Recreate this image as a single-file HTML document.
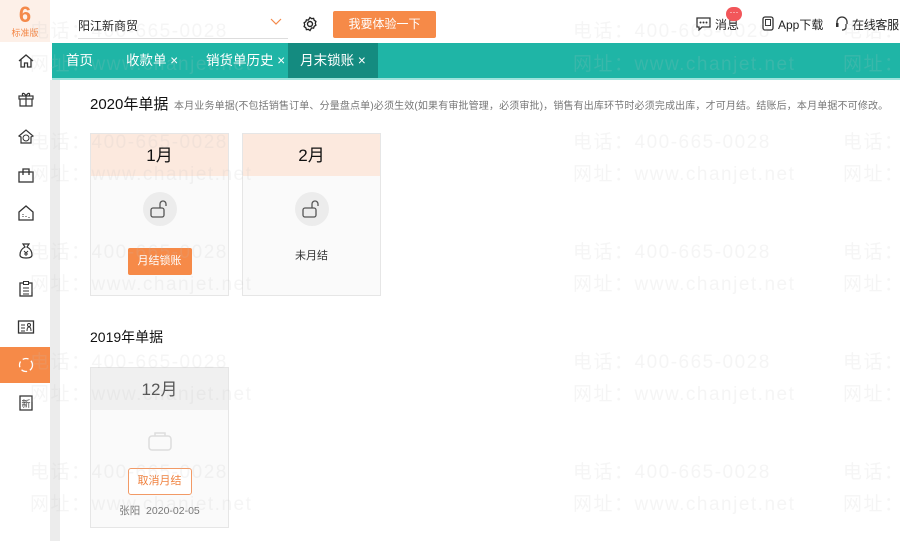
<!DOCTYPE html>
<html><head><meta charset="utf-8">
<style>
*{margin:0;padding:0;box-sizing:border-box}
body{width:900px;height:541px;overflow:hidden;background:#fff;font-family:"Liberation Sans","Noto Sans CJK SC",sans-serif;position:relative;color:#333}
.abs{position:absolute}
.side{left:0;top:0;width:50px;height:541px;background:#fff}
.logo{left:0;top:0;width:50px;height:42px;background:#fdf0e8;text-align:center}
.strip{left:50px;top:80px;width:10px;height:461px;background:#ececec}
.top{left:50px;top:0;width:850px;height:43px;background:#fff}
.tabs{left:52px;top:43px;width:848px;height:37px;background:#1fb5a6;border-bottom:2px solid #9fe3dc}
.tab{position:absolute;top:0;height:35px;line-height:35px;color:#fff;font-size:13.5px}
.ico{position:absolute;left:17px;width:18px;height:18px}
.card{position:absolute;width:139px;border:1px solid #e6e6e6;background:#fafafa}
.ch{height:42px;line-height:44px;text-align:center;font-size:17px;color:#111;background:#fce9de}
.lockc{width:34px;height:34px;border-radius:50%;background:#ececec;margin:16px auto 0;position:relative}
.wm{position:absolute;font-size:19px;color:rgba(190,190,190,0.16);white-space:nowrap;letter-spacing:1.5px;font-family:"Liberation Sans","Noto Sans CJK SC",sans-serif;pointer-events:none}
</style></head><body>
<div class="abs side"></div>
<div class="abs logo">
<div style="font-size:22px;font-weight:bold;color:#f4894a;line-height:26px;padding-top:2px">6</div>
<div style="font-size:9px;color:#f4894a;line-height:10px">标准版</div>
</div>
<div class="abs strip"></div>
<div class="abs top"></div>
<div class="abs" style="left:78px;top:17px;font-size:12px;color:#222">阳江新商贸</div>
<div class="abs" style="left:78px;top:38px;width:210px;height:1px;background:#ddd"></div>
<svg class="abs" style="left:270px;top:18px" width="12" height="8"><path d="M1 1l5 5 5-5" fill="none" stroke="#f4894a" stroke-width="1.2"/></svg>
<svg class="abs" style="left:302px;top:16px" width="16" height="16" viewBox="0 0 16 16"><circle cx="8" cy="8" r="2.5" fill="none" stroke="#222" stroke-width="1.4"/><path d="M8 1.5l1.6 1.2 2-.3.6 1.9 1.7 1.1-.6 1.9.6 1.9-1.7 1.1-.6 1.9-2-.3L8 14.5l-1.6-1.2-2 .3-.6-1.9-1.7-1.1.6-1.9-.6-1.9 1.7-1.1.6-1.9 2 .3z" fill="none" stroke="#222" stroke-width="1.3"/></svg>
<div class="abs" style="left:333px;top:11px;width:103px;height:27px;background:#f68a48;border-radius:2px;color:#fff;font-size:12px;text-align:center;line-height:27px">我要体验一下</div>
<svg class="abs" style="left:696px;top:17px" width="15" height="14"><path d="M1 1h13v9H6l-3 3v-3H1z" fill="none" stroke="#333" stroke-width="1.3"/><circle cx="4.5" cy="5.5" r="1" fill="#333"/><circle cx="7.5" cy="5.5" r="1" fill="#333"/><circle cx="10.5" cy="5.5" r="1" fill="#333"/></svg>
<div class="abs" style="left:715px;top:16px;font-size:12px;color:#222">消息</div>
<div class="abs" style="left:726px;top:7px;width:16px;height:14px;border-radius:8px;background:#f2565a;color:#fff;font-size:9px;line-height:10px;text-align:center">···</div>
<svg class="abs" style="left:762px;top:16px" width="12" height="15"><rect x="1" y="1" width="10" height="13" rx="2" fill="none" stroke="#333" stroke-width="1.3"/><rect x="3.5" y="3.5" width="5" height="6" fill="none" stroke="#333"/></svg>
<div class="abs" style="left:778px;top:16px;font-size:12px;color:#222">App下载</div>
<svg class="abs" style="left:835px;top:16px" width="14" height="15"><path d="M2 8V6a5 5 0 0110 0v2M11 8v3a3 3 0 01-3 3H7" fill="none" stroke="#333" stroke-width="1.3"/><rect x="1" y="7" width="2.5" height="4" fill="#333"/></svg>
<div class="abs" style="left:852px;top:16px;font-size:12px;color:#222;letter-spacing:-0.3px">在线客服</div>

<div class="abs tabs">
<div class="tab" style="left:14px">首页</div>
<div class="tab" style="left:74px">收款单 ×</div>
<div class="tab" style="left:154px">销货单历史 ×</div>
<div class="tab" style="left:236px;width:90px;background:#148b80;text-align:center">月末锁账 ×</div>
</div>

<svg class="ico" style="top:52px" viewBox="0 0 18 18"><path d="M2 9l7-6 7 6M4 7.5V15h3.5v-4h3v4H14V7.5" fill="none" stroke="#333" stroke-width="1.3"/></svg>
<svg class="ico" style="top:90px" viewBox="0 0 18 18"><rect x="2" y="6" width="14" height="3" fill="none" stroke="#333" stroke-width="1.2"/><path d="M3 9v7h12V9M9 6v10M9 6C7 2 4 3 6 6M9 6c2-4 5-3 3 0" fill="none" stroke="#333" stroke-width="1.2"/></svg>
<svg class="ico" style="top:128px" viewBox="0 0 18 18"><path d="M2 8l7-6 7 6-2 1v6H4V9z" fill="none" stroke="#333" stroke-width="1.2"/><circle cx="9" cy="10" r="3" fill="none" stroke="#333"/></svg>
<svg class="ico" style="top:166px" viewBox="0 0 18 18"><rect x="2" y="6" width="14" height="10" fill="none" stroke="#333" stroke-width="1.3"/><path d="M6 6V3h6v3M6 6v3M12 6v3" fill="none" stroke="#333" stroke-width="1.3"/></svg>
<svg class="ico" style="top:204px" viewBox="0 0 18 18"><path d="M2 8l7-6 7 6v8H2z" fill="none" stroke="#333" stroke-width="1.3"/><path d="M6 10v4M9 12v2M12 13v1" stroke="#333" stroke-dasharray="1 1"/></svg>
<svg class="ico" style="top:242px" viewBox="0 0 18 18"><path d="M6 2h6l-2 3c4 2 5 5 5 8 0 2-2 3-6 3s-6-1-6-3c0-3 1-6 5-8z" fill="none" stroke="#333" stroke-width="1.2"/><path d="M7 9l2 2 2-2M9 11v3M7 12h4" fill="none" stroke="#333"/></svg>
<svg class="ico" style="top:280px" viewBox="0 0 18 18"><rect x="3" y="3" width="12" height="13" fill="none" stroke="#333" stroke-width="1.3"/><rect x="6.5" y="1.5" width="5" height="3" fill="#fff" stroke="#333"/><path d="M6 8h6M6 11h6M6 14h6" stroke="#333"/></svg>
<svg class="ico" style="top:318px" viewBox="0 0 18 18"><rect x="1.5" y="3" width="15" height="12" fill="none" stroke="#333" stroke-width="1.3"/><path d="M4 7h4M4 10h4M4 13h4M10 13c0-3 1-4 2-4s2 1 2 4" fill="none" stroke="#333"/><circle cx="12" cy="7" r="1.5" fill="none" stroke="#333"/></svg>
<div class="abs" style="left:0;top:347px;width:50px;height:36px;background:#f68a48"></div>
<svg class="ico" style="top:356px" viewBox="0 0 18 18"><circle cx="9" cy="9" r="6.5" fill="none" stroke="#fff" stroke-width="1.3" stroke-dasharray="6 3"/></svg>
<svg class="ico" style="top:394px" viewBox="0 0 18 18"><path d="M3 2h12v14H3z" fill="none" stroke="#333" stroke-width="1.3"/><text x="4.5" y="13" font-size="9" fill="#333" font-family="Noto Sans CJK SC">新</text></svg>

<div class="abs" style="left:90px;top:93px;font-size:15px;color:#111">2020年单据</div>
<div class="abs" style="left:174px;top:97px;font-size:10px;color:#777;white-space:nowrap;letter-spacing:0.15px">本月业务单据(不包括销售订单、分量盘点单)必须生效(如果有审批管理，必须审批)，销售有出库环节时必须完成出库，才可月结。结账后，本月单据不可修改。</div>

<div class="card" style="left:90px;top:133px;height:163px">
<div class="ch">1月</div>
<div class="lockc"><svg style="position:absolute;left:6px;top:6px" width="22" height="22"><rect x="2" y="10" width="13" height="9" rx="2" fill="none" stroke="#555" stroke-width="1.3"/><path d="M11 10V6a3 3 0 016 0v2" fill="none" stroke="#555" stroke-width="1.3"/></svg></div>
<div style="width:64px;height:27px;margin:22px auto 0;background:#f68a48;border-radius:2px;color:#fff;font-size:11px;text-align:center;line-height:27px">月结锁账</div>
</div>
<div class="card" style="left:242px;top:133px;height:163px">
<div class="ch">2月</div>
<div class="lockc"><svg style="position:absolute;left:6px;top:6px" width="22" height="22"><rect x="2" y="10" width="13" height="9" rx="2" fill="none" stroke="#555" stroke-width="1.3"/><path d="M11 10V6a3 3 0 016 0v2" fill="none" stroke="#555" stroke-width="1.3"/></svg></div>
<div style="text-align:center;font-size:11px;color:#333;margin-top:21px">未月结</div>
</div>

<div class="abs" style="left:90px;top:327px;font-size:14px;color:#111">2019年单据</div>
<div class="card" style="left:90px;top:367px;height:161px">
<div class="ch" style="background:#f0f0f0;color:#555">12月</div>
<svg style="display:block;margin:20px auto 0" width="26" height="22"><rect x="2" y="6" width="22" height="14" rx="3" fill="none" stroke="#ddd" stroke-width="1.5"/><path d="M8 6V3h10v3" fill="none" stroke="#ddd" stroke-width="1.5"/></svg>
<div style="width:64px;height:27px;margin:16px auto 0;border:1px solid #f29a66;border-radius:3px;color:#f0823f;font-size:11px;text-align:center;line-height:25px;background:#fff">取消月结</div>
<div style="text-align:center;font-size:10.5px;color:#777;margin-top:8px">张阳&nbsp;&nbsp;2020-02-05</div>
</div>

<div class="wm" style="left:30px;top:16px">电话：400-665-0028</div>
<div class="wm" style="left:573px;top:16px">电话：400-665-0028</div>
<div class="wm" style="left:843px;top:16px">电话：400-665-0028</div>
<div class="wm" style="left:30px;top:49px">网址：www.chanjet.net</div>
<div class="wm" style="left:573px;top:49px">网址：www.chanjet.net</div>
<div class="wm" style="left:843px;top:49px">网址：www.chanjet.net</div>
<div class="wm" style="left:30px;top:127px">电话：400-665-0028</div>
<div class="wm" style="left:573px;top:127px">电话：400-665-0028</div>
<div class="wm" style="left:843px;top:127px">电话：400-665-0028</div>
<div class="wm" style="left:30px;top:159px">网址：www.chanjet.net</div>
<div class="wm" style="left:573px;top:159px">网址：www.chanjet.net</div>
<div class="wm" style="left:843px;top:159px">网址：www.chanjet.net</div>
<div class="wm" style="left:30px;top:237px">电话：400-665-0028</div>
<div class="wm" style="left:573px;top:237px">电话：400-665-0028</div>
<div class="wm" style="left:843px;top:237px">电话：400-665-0028</div>
<div class="wm" style="left:30px;top:269px">网址：www.chanjet.net</div>
<div class="wm" style="left:573px;top:269px">网址：www.chanjet.net</div>
<div class="wm" style="left:843px;top:269px">网址：www.chanjet.net</div>
<div class="wm" style="left:30px;top:347px">电话：400-665-0028</div>
<div class="wm" style="left:573px;top:347px">电话：400-665-0028</div>
<div class="wm" style="left:843px;top:347px">电话：400-665-0028</div>
<div class="wm" style="left:30px;top:379px">网址：www.chanjet.net</div>
<div class="wm" style="left:573px;top:379px">网址：www.chanjet.net</div>
<div class="wm" style="left:843px;top:379px">网址：www.chanjet.net</div>
<div class="wm" style="left:30px;top:457px">电话：400-665-0028</div>
<div class="wm" style="left:573px;top:457px">电话：400-665-0028</div>
<div class="wm" style="left:843px;top:457px">电话：400-665-0028</div>
<div class="wm" style="left:30px;top:489px">网址：www.chanjet.net</div>
<div class="wm" style="left:573px;top:489px">网址：www.chanjet.net</div>
<div class="wm" style="left:843px;top:489px">网址：www.chanjet.net</div>
</body></html>
